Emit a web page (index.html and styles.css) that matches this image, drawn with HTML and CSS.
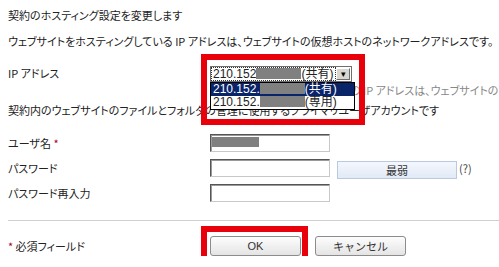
FILE: index.html
```html
<!DOCTYPE html>
<html lang="ja">
<head>
<meta charset="UTF-8" />
<title>ホスティング設定の変更</title>
<link rel="stylesheet" href="styles.css">
</head>
<body>
  <div class="page">
    <p class="intro">契約のホスティング設定を変更します</p>
    <p class="intro gap">ウェブサイトをホスティングしている IP アドレスは、ウェブサイトの仮想ホストのネットワークアドレスです。</p>

    <div class="form">
      <div class="row ip-row">
        <div class="label">IP アドレス</div>
        <div class="field">
          <div class="combo">
            <div class="combo-box">
              <span class="combo-value">210.152<span class="redact"></span>(共有)</span>
              <span class="combo-btn">&#9662;</span>
            </div>
            <!-- 開いたドロップダウン -->
            <ul class="combo-list">
              <li class="selected">210.152.<span class="redact"></span>(共有)</li>
              <li>210.152.<span class="redact"></span>(専用)</li>
            </ul>
            <div class="mark mark-ip"></div>
          </div>
          <div class="hint">共有の IP アドレスまたは専用の IP アドレスは、ウェブサイトのコンテンツを公開します</div>
        </div>
      </div>

      <p class="desc">契約内のウェブサイトのファイルとフォルダの管理に使用するプライマリユーザアカウントです</p>

      <div class="row user-row">
        <div class="label">ユーザ名 <span class="req">*</span></div>
        <div class="field"><div class="input"><span class="redact small"></span></div></div>
      </div>
      <div class="row">
        <div class="label">パスワード</div>
        <div class="field pw">
          <div class="input"></div>
          <div class="strength">最弱</div>
          <span class="help">(?)</span>
        </div>
      </div>
      <div class="row">
        <div class="label">パスワード再入力</div>
        <div class="field"><div class="input"></div></div>
      </div>

      <hr class="sep">

      <div class="row footer">
        <div class="label"><span class="req">*</span> 必須フィールド</div>
        <div class="field buttons">
          <div class="btn-wrap">
            <button class="btn" type="button">OK</button>
            <div class="mark mark-ok"></div>
          </div>
          <button class="btn" type="button">キャンセル</button>
        </div>
      </div>
    </div>
  </div>
</body>
</html>
```

FILE: styles.css
```css
body {
  margin: 0;
  background: #fff;
  font-family: "Noto Sans CJK JP", sans-serif;
  font-size: 11px;
  line-height: 14px;
  color: #222;
  font-feature-settings: "palt";
  overflow: hidden;
}
.page {
  padding: 8px 0 0 8px;
}
.intro {
  margin: 0;
  white-space: nowrap;
}
.intro.gap {
  margin-top: 12px;
}
.form {
  margin-top: 18px;
}
.row {
  display: grid;
  grid-template-columns: 202px auto;
  align-items: center;
  margin-top: 7px;
}
.ip-row {
  margin-top: 0;
  align-items: start;
}
.ip-row .label {
  line-height: 14px;
}
.field {
  position: relative;
  min-width: 0;
}
.req {
  color: #a0002a;
}
.redact {
  display: inline-block;
  width: 45px;
  height: 11px;
  background: #808080;
  vertical-align: -1px;
}
.redact.small {
  width: 47px;
  height: 10px;
  margin: 2px 0 0 1px;
  vertical-align: top;
}

/* コンボボックス */
.combo {
  position: relative;
  width: 142px;
}
.combo-box {
  display: flex;
  align-items: center;
  height: 14px;
  border: 1px solid #6f6f6f;
  background: #fff;
  font-family: "Liberation Sans", "Noto Sans CJK JP", sans-serif;
  font-size: 12px;
}
.combo-value {
  flex: 1;
  height: 12px;
  line-height: 12px;
  margin: 0 1px;
  outline: 1px dotted #333;
  padding-left: 1px;
  white-space: nowrap;
}
.combo-btn {
  width: 14px;
  height: 12px;
  margin-right: 1px;
  background: #d8d6d0;
  border: 1px solid;
  border-color: #fff #6f6f6f #6f6f6f #fff;
  box-sizing: border-box;
  font-size: 9px;
  line-height: 10px;
  text-align: center;
  color: #000;
}
.combo-list {
  position: absolute;
  left: 0;
  top: 16px;
  width: 143px;
  margin: 0;
  padding: 0;
  list-style: none;
  border: 1px solid #000;
  background: #fff;
  z-index: 2;
  font-family: "Liberation Sans", "Noto Sans CJK JP", sans-serif;
  font-size: 12px;
  line-height: 13px;
}
.combo-list li {
  padding-left: 2px;
  white-space: nowrap;
}
.combo-list li.selected {
  background: #0a246a;
  color: #fff;
}
.hint {
  margin-top: 1px;
  white-space: nowrap;
  color: #888;
}
.desc {
  margin: 6px 0 0;
  white-space: nowrap;
}

/* 入力欄 */
.user-row {
  margin-top: 17px;
}
.input {
  width: 120px;
  height: 18px;
  box-sizing: border-box;
  border: 1px solid;
  border-color: #555 #c8c8c8 #c8c8c8 #555;
  box-shadow: inset 1px 1px 0 #9a9a9a;
  background: #fff;
}
.pw {
  display: flex;
  align-items: center;
}
.strength {
  width: 120px;
  height: 18px;
  margin: 2px 0 -2px 7px;
  box-sizing: border-box;
  border: 1px solid #b9c9e2;
  background: linear-gradient(#f4f7fd, #e2eaf6);
  text-align: center;
  line-height: 16px;
  color: #333;
}
.help {
  margin-left: 2px;
  color: #444;
}
.sep {
  margin: 18px 0 0;
  border: 0;
  border-top: 1px solid #d0d0d0;
}

/* ボタン */
.footer {
  margin-top: 15px;
}
.buttons {
  display: flex;
  gap: 14px;
}
.btn-wrap {
  position: relative;
}
.btn {
  display: block;
  width: 91px;
  height: 20px;
  padding: 0;
  border: 1px solid #8c8c8c;
  border-radius: 3px;
  background: linear-gradient(#fdfdfd, #e4e4e4);
  font-family: "Liberation Sans", "Noto Sans CJK JP", sans-serif;
  font-size: 11px;
  color: #333;
}

/* 赤枠の注記 */
.mark {
  position: absolute;
  border: 6px solid #e8000b;
  box-sizing: border-box;
  pointer-events: none;
  z-index: 3;
}
.mark-ip {
  left: -9px;
  top: -12px;
  width: 164px;
  height: 71px;
}
.mark-ok {
  left: -9px;
  top: -10px;
  width: 107px;
  height: 40px;
}
```
